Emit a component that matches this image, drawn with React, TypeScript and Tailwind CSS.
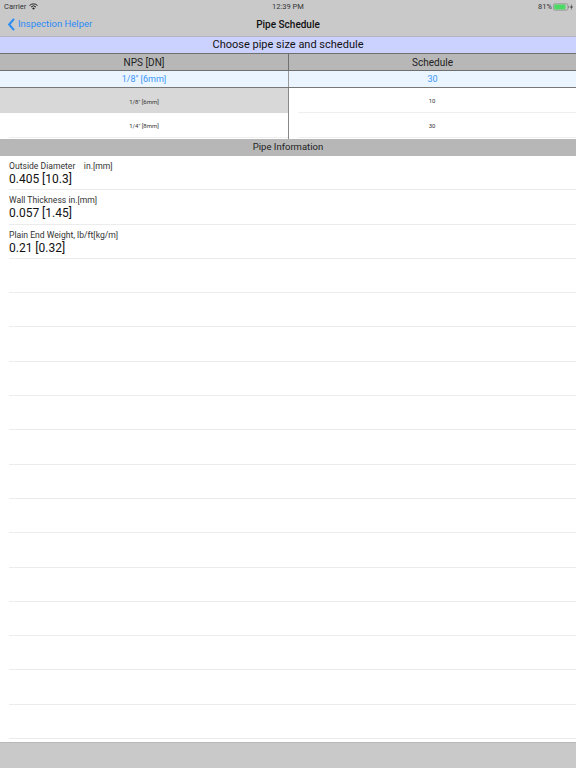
import React from "react";

const info = [
  ["Outside Diameter    in.[mm]", "0.405 [10.3]"],
  ["Wall Thickness in.[mm]", "0.057 [1.45]"],
  ["Plain End Weight, lb/ft[kg/m]", "0.21 [0.32]"],
];
const empty = Array.from({ length: 14 }, (_, i) => i);

export default function App() {
  return (
    <div className="w-[576px] h-[768px] flex flex-col bg-white overflow-hidden text-[#1c1c1c] font-['Roboto','Liberation_Sans',sans-serif]">
      <header className="h-[37px] shrink-0 bg-[#c9c9ca] border-b border-[#b4b4c4] relative">
        <div className="h-3 flex items-center justify-between pl-[4px] pr-[2px] pt-[1px] text-[7.5px] text-[#333] relative">
          <div className="flex items-center gap-[3px]">
            <span>Carrier</span>
            <svg width="9" height="7" viewBox="0 0 18 14" fill="none" stroke="#222" strokeWidth="2">
              <path d="M1 5 A11.5 11.5 0 0 1 17 5" />
              <path d="M4 8 A7.2 7.2 0 0 1 14 8" />
              <path d="M9 13.5 L6.2 10.6 A4 4 0 0 1 11.8 10.6 Z" fill="#222" stroke="none" />
            </svg>
          </div>
          <span className="absolute inset-x-0 text-center">12:39 PM</span>
          <div className="flex items-center gap-[1px]">
            <span>81%</span>
            <svg width="21" height="8" viewBox="0 0 21 8">
              <rect x="0.4" y="0.8" width="14.5" height="6.4" rx="1.4" fill="none" stroke="#888" strokeWidth="0.7" />
              <rect x="1.2" y="1.6" width="11.4" height="4.8" rx="0.8" fill="#4cd964" />
              <rect x="15.3" y="3" width="0.9" height="2" fill="#777" />
              <path d="M19 0.8 L17.2 4.4 H18.6 L18 7.2 L19.8 3.4 H18.4 Z" fill="#222" />
            </svg>
          </div>
        </div>
        <div className="h-[24px] flex items-center relative">
          <div className="flex items-center text-[#2b8bf5] text-[9.5px] pl-[8px] gap-[3px]">
            <svg width="7" height="13" viewBox="0 0 7 13" fill="none">
              <path d="M6 0.8 L1.2 6.5 L6 12.2" stroke="#2b8bf5" strokeWidth="2" />
            </svg>
            <span>Inspection Helper</span>
          </div>
          <div className="absolute inset-x-0 text-center text-[10px] font-medium text-[#111]">Pipe Schedule</div>
        </div>
      </header>

      <div className="h-4 shrink-0 bg-[#ccd2ff] flex items-center justify-center text-[11px] text-[#111]">
        Choose pipe size and schedule
      </div>

      <div className="h-[18px] shrink-0 bg-[#b7b7b7] border-y border-[#6f6f6f] grid grid-cols-[289px_1fr] text-[10px] text-[#222]">
        <div className="flex items-center justify-center border-r border-[#6f6f6f]">NPS [DN]</div>
        <div className="flex items-center justify-center">Schedule</div>
      </div>

      <div className="h-[17px] shrink-0 bg-[#ebf5ff] border-b border-[#777] grid grid-cols-[289px_1fr] text-[9px] text-[#3b95f7]">
        <div className="flex items-center justify-center border-r border-[#999] pt-[1px]">1/8&apos;&apos; [6mm]</div>
        <div className="flex items-center justify-center pt-[1px]">30</div>
      </div>

      <div className="h-[51px] shrink-0 grid grid-cols-[289px_1fr] text-[6px] text-[#333]">
        <div className="flex flex-col border-r border-[#888]">
          <div className="h-[25px] bg-[#d8d8d8] flex items-center justify-center pt-[1px]">1/8&apos;&apos; [6mm]</div>
          <div className="h-[25px] flex items-center justify-center border-b border-[#efefef] ml-[9px] pt-[1px]">
            <span className="-ml-[9px]">1/4&apos;&apos; [8mm]</span>
          </div>
        </div>
        <div className="flex flex-col">
          <div className="h-[25px] flex items-center justify-center border-b border-[#efefef] ml-[9px] pt-[1px]">
            <span className="-ml-[10px]">10</span>
          </div>
          <div className="h-[25px] flex items-center justify-center border-b border-[#efefef] ml-[9px] pt-[1px]">
            <span className="-ml-[10px]">30</span>
          </div>
        </div>
      </div>

      <div className="h-[17px] shrink-0 bg-[#b7b7b7] flex items-center justify-center text-[9.5px] text-[#222]">
        Pipe Information
      </div>

      <div className="flex-1 min-h-0 pl-[9px]">
        {info.map(([label, value]) => (
          <div key={label} className="h-[34.3px] border-b border-[#ececec] flex flex-col pt-[5px]">
            <div className="text-[8.6px] leading-[11px] text-[#333] whitespace-pre">{label}</div>
            <div className="text-[12px] leading-[15px] text-[#111]">{value}</div>
          </div>
        ))}
        {empty.map((i) => (
          <div key={i} className="h-[34.3px] border-b border-[#ececec]" />
        ))}
      </div>

      <footer className="h-[26px] shrink-0 bg-[#c9c9ca] border-t border-[#b9b9b9]" />
    </div>
  );
}
